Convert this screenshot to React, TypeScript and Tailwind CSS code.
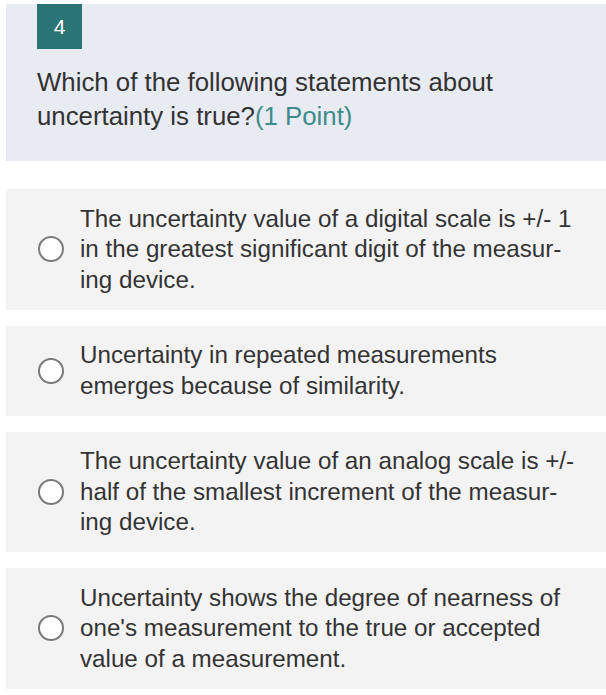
import React from "react";

const options = [
  [
    "The uncertainty value of a digital scale is +/- 1",
    "in the greatest significant digit of the measur-",
    "ing device.",
  ],
  ["Uncertainty in repeated measurements", "emerges because of similarity."],
  [
    "The uncertainty value of an analog scale is +/-",
    "half of the smallest increment of the measur-",
    "ing device.",
  ],
  [
    "Uncertainty shows the degree of nearness of",
    "one's measurement to the true or accepted",
    "value of a measurement.",
  ],
];

export default function App() {
  return (
    <div
      className="w-[606px] h-[695px] bg-white pt-[4px] pl-[6px] overflow-hidden"
      style={{ fontFamily: '"Liberation Sans", Arial, sans-serif' }}
    >
      <div className="bg-[#e9ebf3] h-[157px] pl-[31px]">
        <div className="w-[45px] h-[45px] bg-[#2b7474] text-white text-[21px] flex items-center justify-center">
          4
        </div>
        <div className="mt-[16px] text-[25.8px] leading-[34px] text-[#333333]">
          <div>Which of the following statements about</div>
          <div>
            uncertainty is true?<span className="text-[#3f8b8b]">(1 Point)</span>
          </div>
        </div>
      </div>
      <div className="mt-[28px] flex flex-col gap-[16px]">
        {options.map((lines, i) => (
          <div
            key={i}
            className="bg-[#f3f3f3] flex items-center pl-[32px] py-[14.5px]"
          >
            <div className="w-[26px] h-[26px] rounded-full border-2 border-[#7a7a7a] bg-white shrink-0" />
            <div className="ml-[16px] text-[24.2px] leading-[30.5px] text-[#333333] whitespace-nowrap">
              {lines.map((l, j) => (
                <div key={j}>{l}</div>
              ))}
            </div>
          </div>
        ))}
      </div>
    </div>
  );
}
